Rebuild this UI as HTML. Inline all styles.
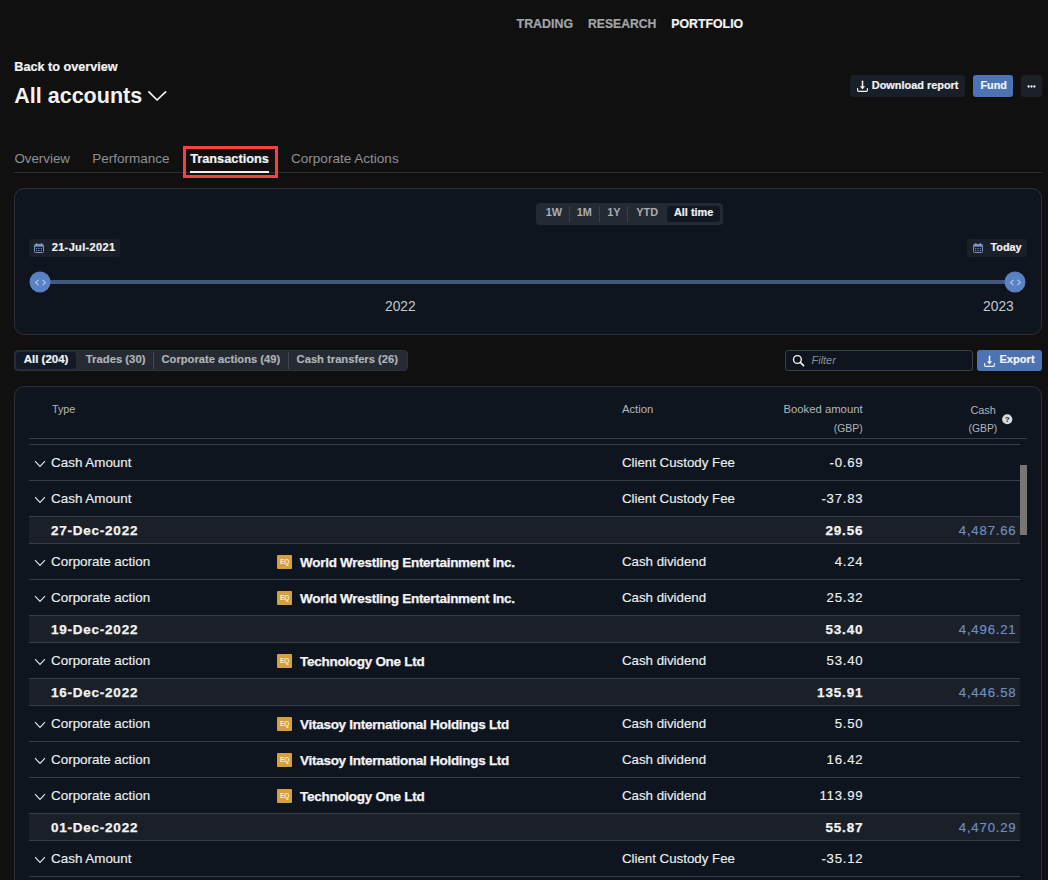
<!DOCTYPE html>
<html><head><meta charset="utf-8"><style>
html,body{margin:0;padding:0;}
body{width:1048px;height:880px;overflow:hidden;background:#101010;position:relative;font-family:"Liberation Sans",sans-serif;}
.t{position:absolute;white-space:nowrap;line-height:1;}
.r{position:absolute;}
</style></head><body>
<div class="t" style="top:18.00px;font-size:12.4px;font-weight:700;color:#a2a5aa;left:516.60px;-webkit-text-stroke:0.2px #a2a5aa;">TRADING</div>
<div class="t" style="top:18.00px;font-size:12.2px;font-weight:700;color:#a2a5aa;left:588.00px;-webkit-text-stroke:0.2px #a2a5aa;">RESEARCH</div>
<div class="t" style="top:18.00px;font-size:12.35px;font-weight:700;color:#f2f3f5;left:671.20px;-webkit-text-stroke:0.2px #f2f3f5;">PORTFOLIO</div>
<div class="t" style="top:61.00px;font-size:12.66px;font-weight:700;color:#f2f3f5;left:14.30px;-webkit-text-stroke:0.2px #f2f3f5;">Back to overview</div>
<div class="t" style="top:86.00px;font-size:21.5px;font-weight:700;color:#f2f3f5;left:14.30px;">All accounts</div>
<svg class="r" style="left:148px;top:90px" width="19" height="13" viewBox="0 0 19 13"><path d="M0.9 1.9 L9.1 10 L17.6 1.9" fill="none" stroke="#f2f3f5" stroke-width="1.7" stroke-linecap="round" stroke-linejoin="round"/></svg>
<div class="r" style="left:850px;top:75px;width:115px;height:22px;background:#191f28;border-radius:3px;"></div>
<svg class="r" style="left:856px;top:80px" width="13" height="13" viewBox="0 0 13 13"><path d="M6.5 1.2 V6.8" stroke="#f2f3f5" stroke-width="1.5" stroke-linecap="round"/><path d="M3.9 6.2 H9.1 L6.5 9.6 Z" fill="#f2f3f5"/><path d="M1.6 8.6 V10.3 Q1.6 11.4 2.7 11.4 H10.3 Q11.4 11.4 11.4 10.3 V8.6" fill="none" stroke="#f2f3f5" stroke-width="1.2" stroke-linecap="round"/></svg>
<div class="t" style="top:80.00px;font-size:10.92px;font-weight:700;color:#f2f3f5;left:871.80px;-webkit-text-stroke:0.2px #f2f3f5;">Download report</div>
<div class="r" style="left:973px;top:75px;width:40px;height:22px;background:#4c73b3;border-radius:3px;"></div>
<div class="t" style="top:80.00px;font-size:10.8px;font-weight:700;color:#f2f3f5;left:980.50px;-webkit-text-stroke:0.2px #f2f3f5;">Fund</div>
<div class="r" style="left:1021px;top:75px;width:21px;height:22px;background:#1b2029;border-radius:3px;"></div>
<svg class="r" style="left:1021px;top:75px" width="21" height="22" viewBox="0 0 21 22"><circle cx="7.6" cy="11.5" r="1.15" fill="#f2f3f5"/><circle cx="10.5" cy="11.5" r="1.15" fill="#f2f3f5"/><circle cx="13.4" cy="11.5" r="1.15" fill="#f2f3f5"/></svg>
<div class="t" style="top:152.00px;font-size:13.35px;font-weight:400;color:#8d9197;left:14.40px;">Overview</div>
<div class="t" style="top:152.00px;font-size:13.5px;font-weight:400;color:#8d9197;left:92.20px;">Performance</div>
<div class="t" style="top:153.00px;font-size:12.76px;font-weight:700;color:#f2f3f5;left:190.20px;-webkit-text-stroke:0.2px #f2f3f5;">Transactions</div>
<div class="t" style="top:152.00px;font-size:13.55px;font-weight:400;color:#8d9197;left:291.00px;">Corporate Actions</div>
<div class="r" style="left:14px;top:172px;width:1028px;height:1px;background:#2c3036;"></div>
<div class="r" style="left:190px;top:171px;width:79px;height:2px;background:#f2f3f5;"></div>
<div class="r" style="left:183px;top:146px;width:95px;height:32px;background:transparent;border:3px solid #ef4441;box-sizing:border-box;"></div>
<div class="r" style="left:14px;top:188px;width:1028px;height:147px;background:#0e151f;border:1px solid #2b3139;border-radius:10px;box-sizing:border-box;"></div>
<div class="r" style="left:536px;top:203px;width:187px;height:22px;background:#242a33;border-radius:4px;"></div>
<div class="r" style="left:569px;top:206px;width:1px;height:16px;background:#3b414a;"></div>
<div class="r" style="left:599px;top:206px;width:1px;height:16px;background:#3b414a;"></div>
<div class="r" style="left:627px;top:206px;width:1px;height:16px;background:#3b414a;"></div>
<div class="t" style="top:207.00px;font-size:10.9px;font-weight:700;color:#a9adb3;left:545.80px;">1W</div>
<div class="t" style="top:207.00px;font-size:10.9px;font-weight:700;color:#a9adb3;left:576.80px;">1M</div>
<div class="t" style="top:207.00px;font-size:10.9px;font-weight:700;color:#a9adb3;left:607.30px;">1Y</div>
<div class="t" style="top:207.00px;font-size:10.9px;font-weight:700;color:#a9adb3;left:636.30px;">YTD</div>
<div class="r" style="left:667px;top:206px;width:53px;height:16px;background:#101824;border-radius:3px;"></div>
<div class="t" style="top:207.00px;font-size:10.86px;font-weight:700;color:#f2f3f5;left:674.00px;-webkit-text-stroke:0.2px #f2f3f5;">All time</div>
<div class="r" style="left:29px;top:239px;width:91px;height:18px;background:#1a1f28;border-radius:2px;"></div>
<svg class="r" style="left:34px;top:243px" width="10" height="10" viewBox="0 0 10 10"><rect x="0.5" y="1.5" width="9" height="8" rx="1" fill="none" stroke="#7594c4" stroke-width="1"/><rect x="0.5" y="1.5" width="9" height="2.2" fill="#7594c4"/><rect x="2.3" y="0" width="1" height="2" fill="#8aa6d0"/><rect x="6.7" y="0" width="1" height="2" fill="#8aa6d0"/><rect x="2" y="5" width="1.2" height="1" fill="#6f8dbb"/><rect x="4.4" y="5" width="1.2" height="1" fill="#6f8dbb"/><rect x="6.8" y="5" width="1.2" height="1" fill="#6f8dbb"/><rect x="2" y="7" width="1.2" height="1" fill="#6f8dbb"/><rect x="4.4" y="7" width="1.2" height="1" fill="#6f8dbb"/><rect x="6.8" y="7" width="1.2" height="1" fill="#6f8dbb"/></svg>
<div class="t" style="top:242.00px;font-size:11.0px;font-weight:700;color:#f2f3f5;letter-spacing:0.35px;left:51.70px;-webkit-text-stroke:0.2px #f2f3f5;">21-Jul-2021</div>
<div class="r" style="left:967px;top:239px;width:60px;height:18px;background:#1a1f28;border-radius:2px;"></div>
<svg class="r" style="left:973px;top:243px" width="10" height="10" viewBox="0 0 10 10"><rect x="0.5" y="1.5" width="9" height="8" rx="1" fill="none" stroke="#7594c4" stroke-width="1"/><rect x="0.5" y="1.5" width="9" height="2.2" fill="#7594c4"/><rect x="2.3" y="0" width="1" height="2" fill="#8aa6d0"/><rect x="6.7" y="0" width="1" height="2" fill="#8aa6d0"/><rect x="2" y="5" width="1.2" height="1" fill="#6f8dbb"/><rect x="4.4" y="5" width="1.2" height="1" fill="#6f8dbb"/><rect x="6.8" y="5" width="1.2" height="1" fill="#6f8dbb"/><rect x="2" y="7" width="1.2" height="1" fill="#6f8dbb"/><rect x="4.4" y="7" width="1.2" height="1" fill="#6f8dbb"/><rect x="6.8" y="7" width="1.2" height="1" fill="#6f8dbb"/></svg>
<div class="t" style="top:242.00px;font-size:10.8px;font-weight:700;color:#f2f3f5;left:990.50px;-webkit-text-stroke:0.2px #f2f3f5;">Today</div>
<div class="r" style="left:40px;top:280px;width:976px;height:4px;background:#42587c;"></div>
<svg class="r" style="left:28.6px;top:271px" width="22" height="22" viewBox="0 0 22 22"><circle cx="11" cy="11" r="10.5" fill="#5a82c2"/><path d="M9.5 8.8 L6.6 11.5 L9.5 14.2 M13.5 8.8 L16.4 11.5 L13.5 14.2" fill="none" stroke="#b0c8ee" stroke-width="1.1"/></svg>
<svg class="r" style="left:1004.4px;top:271px" width="22" height="22" viewBox="0 0 22 22"><circle cx="11" cy="11" r="10.5" fill="#5a82c2"/><path d="M9.5 8.8 L6.6 11.5 L9.5 14.2 M13.5 8.8 L16.4 11.5 L13.5 14.2" fill="none" stroke="#b0c8ee" stroke-width="1.1"/></svg>
<div class="t" style="top:300.00px;font-size:13.8px;font-weight:400;color:#c4c8cc;left:385.00px;">2022</div>
<div class="t" style="top:300.00px;font-size:13.8px;font-weight:400;color:#c4c8cc;left:983.10px;">2023</div>
<div class="r" style="left:14px;top:350px;width:394px;height:21px;background:#262b33;border:1px solid #2d323a;box-sizing:border-box;border-radius:4px;"></div>
<div class="r" style="left:16px;top:352px;width:60px;height:17px;background:#111a26;border-radius:3px;"></div>
<div class="t" style="top:354.00px;font-size:11.5px;font-weight:700;color:#f2f3f5;left:23.70px;-webkit-text-stroke:0.2px #f2f3f5;">All (204)</div>
<div class="t" style="top:354.00px;font-size:11.3px;font-weight:700;color:#b0b4ba;left:85.80px;-webkit-text-stroke:0.15px #b0b4ba;">Trades (30)</div>
<div class="r" style="left:153px;top:352px;width:1px;height:17px;background:#424851;"></div>
<div class="t" style="top:354.00px;font-size:11.2px;font-weight:700;color:#b0b4ba;left:161.50px;-webkit-text-stroke:0.15px #b0b4ba;">Corporate actions (49)</div>
<div class="r" style="left:288px;top:352px;width:1px;height:17px;background:#424851;"></div>
<div class="t" style="top:354.00px;font-size:11.2px;font-weight:700;color:#b0b4ba;left:296.60px;-webkit-text-stroke:0.15px #b0b4ba;">Cash transfers (26)</div>
<div class="r" style="left:785px;top:350px;width:188px;height:21px;background:#0e151f;border:1px solid #3b4048;border-radius:3px;box-sizing:border-box;"></div>
<svg class="r" style="left:792px;top:354px" width="13" height="13" viewBox="0 0 13 13"><circle cx="5.4" cy="5.5" r="3.9" fill="none" stroke="#f2f3f5" stroke-width="1.4"/><path d="M8.3 8.4 L11.6 11.6" stroke="#f2f3f5" stroke-width="1.6" stroke-linecap="round"/></svg>
<div class="t" style="top:355.00px;font-size:10.9px;font-weight:400;color:#8a8f96;font-style:italic;left:811.60px;">Filter</div>
<div class="r" style="left:977px;top:350px;width:65px;height:21px;background:#4c73b3;border-radius:3px;"></div>
<svg class="r" style="left:983px;top:354.5px" width="13" height="13" viewBox="0 0 13 13"><path d="M6.5 1.2 V6.8" stroke="#f2f3f5" stroke-width="1.5" stroke-linecap="round"/><path d="M3.9 6.2 H9.1 L6.5 9.6 Z" fill="#f2f3f5"/><path d="M1.6 8.6 V10.3 Q1.6 11.4 2.7 11.4 H10.3 Q11.4 11.4 11.4 10.3 V8.6" fill="none" stroke="#f2f3f5" stroke-width="1.2" stroke-linecap="round"/></svg>
<div class="t" style="top:354.00px;font-size:11.14px;font-weight:700;color:#f2f3f5;left:999.40px;-webkit-text-stroke:0.2px #f2f3f5;">Export</div>
<div class="r" style="left:14px;top:386px;width:1028px;height:514px;background:#0e151f;border:1px solid #2b3139;border-radius:10px;box-sizing:border-box;"></div>
<div class="t" style="top:404.00px;font-size:10.8px;font-weight:400;color:#b0b5bb;left:51.90px;">Type</div>
<div class="t" style="top:404.00px;font-size:11.3px;font-weight:400;color:#b0b5bb;left:621.90px;">Action</div>
<div class="t" style="top:404.00px;font-size:11.3px;font-weight:400;color:#b0b5bb;right:185.40px;">Booked amount</div>
<div class="t" style="top:424.00px;font-size:10.4px;font-weight:400;color:#b0b5bb;right:185.40px;">(GBP)</div>
<div class="t" style="top:405.00px;font-size:10.9px;font-weight:400;color:#b0b5bb;right:52.20px;">Cash</div>
<div class="t" style="top:424.00px;font-size:10.4px;font-weight:400;color:#b0b5bb;right:50.70px;">(GBP)</div>
<svg class="r" style="left:1001.5px;top:413.6px" width="11" height="11" viewBox="0 0 11 11"><circle cx="5.25" cy="5.25" r="5.1" fill="#d8dbe0"/><text x="5.25" y="8.2" font-size="8" font-weight="700" text-anchor="middle" fill="#0e141c" font-family="Liberation Sans">?</text></svg>
<div class="r" style="left:29px;top:438px;width:998px;height:1px;background:#383e47;"></div>
<div class="r" style="left:29px;top:444px;width:991px;height:1px;background:#383e47;"></div>
<svg class="r" style="left:34px;top:460px" width="12" height="8" viewBox="0 0 12 8"><path d="M1 1.2 L6 6.5 L11 1.2" fill="none" stroke="#e6e8eb" stroke-width="1.1"/></svg>
<div class="t" style="top:456.00px;font-size:13.4px;font-weight:400;color:#eceef0;left:51.10px;-webkit-text-stroke:0.15px #eceef0;">Cash Amount</div>
<div class="t" style="top:456.00px;font-size:13.3px;font-weight:400;color:#eceef0;left:621.90px;-webkit-text-stroke:0.15px #eceef0;">Client Custody Fee</div>
<div class="t" style="top:456.00px;font-size:13.2px;font-weight:400;color:#eceef0;letter-spacing:0.75px;right:185.40px;margin-right:-0.75px;-webkit-text-stroke:0.15px #eceef0;">-0.69</div>
<div class="r" style="left:29px;top:480px;width:991px;height:1px;background:#383e47;"></div>
<svg class="r" style="left:34px;top:496px" width="12" height="8" viewBox="0 0 12 8"><path d="M1 1.2 L6 6.5 L11 1.2" fill="none" stroke="#e6e8eb" stroke-width="1.1"/></svg>
<div class="t" style="top:492.00px;font-size:13.4px;font-weight:400;color:#eceef0;left:51.10px;-webkit-text-stroke:0.15px #eceef0;">Cash Amount</div>
<div class="t" style="top:492.00px;font-size:13.3px;font-weight:400;color:#eceef0;left:621.90px;-webkit-text-stroke:0.15px #eceef0;">Client Custody Fee</div>
<div class="t" style="top:492.00px;font-size:13.2px;font-weight:400;color:#eceef0;letter-spacing:0.75px;right:185.40px;margin-right:-0.75px;-webkit-text-stroke:0.15px #eceef0;">-37.83</div>
<div class="r" style="left:29px;top:516px;width:991px;height:1px;background:#383e47;"></div>
<div class="r" style="left:29px;top:517px;width:991px;height:26px;background:#1a1f28;"></div>
<div class="t" style="top:524.00px;font-size:13.5px;font-weight:700;color:#f2f3f5;letter-spacing:0.75px;left:51.10px;-webkit-text-stroke:0.25px #f2f3f5;">27-Dec-2022</div>
<div class="t" style="top:524.00px;font-size:13.5px;font-weight:700;color:#f2f3f5;letter-spacing:0.85px;right:185.40px;margin-right:-0.85px;-webkit-text-stroke:0.25px #f2f3f5;">29.56</div>
<div class="t" style="top:524.00px;font-size:13.2px;font-weight:400;color:#6e8ec2;letter-spacing:0.8px;right:32.30px;margin-right:-0.8px;-webkit-text-stroke:0.2px #6e8ec2;">4,487.66</div>
<div class="r" style="left:29px;top:543px;width:991px;height:1px;background:#383e47;"></div>
<svg class="r" style="left:34px;top:559px" width="12" height="8" viewBox="0 0 12 8"><path d="M1 1.2 L6 6.5 L11 1.2" fill="none" stroke="#e6e8eb" stroke-width="1.1"/></svg>
<div class="t" style="top:555.00px;font-size:13.4px;font-weight:400;color:#eceef0;left:51.10px;-webkit-text-stroke:0.15px #eceef0;">Corporate action</div>
<div class="r" style="left:277px;top:555px;width:15px;height:14px;background:#d6a03c;border-radius:1px;"></div>
<div class="t" style="left:277px;top:559px;width:15px;text-align:center;font-size:6.5px;font-weight:700;color:#f7eed6;line-height:6px;letter-spacing:-0.2px">EQ</div>
<div class="t" style="top:556.00px;font-size:13.5px;font-weight:700;color:#f2f3f5;letter-spacing:-0.29px;left:300.10px;-webkit-text-stroke:0.25px #f2f3f5;">World Wrestling Entertainment Inc.</div>
<div class="t" style="top:555.00px;font-size:13.3px;font-weight:400;color:#eceef0;left:621.90px;-webkit-text-stroke:0.15px #eceef0;">Cash dividend</div>
<div class="t" style="top:555.00px;font-size:13.2px;font-weight:400;color:#eceef0;letter-spacing:0.75px;right:185.40px;margin-right:-0.75px;-webkit-text-stroke:0.15px #eceef0;">4.24</div>
<div class="r" style="left:29px;top:579px;width:991px;height:1px;background:#383e47;"></div>
<svg class="r" style="left:34px;top:595px" width="12" height="8" viewBox="0 0 12 8"><path d="M1 1.2 L6 6.5 L11 1.2" fill="none" stroke="#e6e8eb" stroke-width="1.1"/></svg>
<div class="t" style="top:591.00px;font-size:13.4px;font-weight:400;color:#eceef0;left:51.10px;-webkit-text-stroke:0.15px #eceef0;">Corporate action</div>
<div class="r" style="left:277px;top:591px;width:15px;height:14px;background:#d6a03c;border-radius:1px;"></div>
<div class="t" style="left:277px;top:595px;width:15px;text-align:center;font-size:6.5px;font-weight:700;color:#f7eed6;line-height:6px;letter-spacing:-0.2px">EQ</div>
<div class="t" style="top:592.00px;font-size:13.5px;font-weight:700;color:#f2f3f5;letter-spacing:-0.29px;left:300.10px;-webkit-text-stroke:0.25px #f2f3f5;">World Wrestling Entertainment Inc.</div>
<div class="t" style="top:591.00px;font-size:13.3px;font-weight:400;color:#eceef0;left:621.90px;-webkit-text-stroke:0.15px #eceef0;">Cash dividend</div>
<div class="t" style="top:591.00px;font-size:13.2px;font-weight:400;color:#eceef0;letter-spacing:0.75px;right:185.40px;margin-right:-0.75px;-webkit-text-stroke:0.15px #eceef0;">25.32</div>
<div class="r" style="left:29px;top:615px;width:991px;height:1px;background:#383e47;"></div>
<div class="r" style="left:29px;top:616px;width:991px;height:26px;background:#1a1f28;"></div>
<div class="t" style="top:623.00px;font-size:13.5px;font-weight:700;color:#f2f3f5;letter-spacing:0.75px;left:51.10px;-webkit-text-stroke:0.25px #f2f3f5;">19-Dec-2022</div>
<div class="t" style="top:623.00px;font-size:13.5px;font-weight:700;color:#f2f3f5;letter-spacing:0.85px;right:185.40px;margin-right:-0.85px;-webkit-text-stroke:0.25px #f2f3f5;">53.40</div>
<div class="t" style="top:623.00px;font-size:13.2px;font-weight:400;color:#6e8ec2;letter-spacing:0.8px;right:32.30px;margin-right:-0.8px;-webkit-text-stroke:0.2px #6e8ec2;">4,496.21</div>
<div class="r" style="left:29px;top:642px;width:991px;height:1px;background:#383e47;"></div>
<svg class="r" style="left:34px;top:658px" width="12" height="8" viewBox="0 0 12 8"><path d="M1 1.2 L6 6.5 L11 1.2" fill="none" stroke="#e6e8eb" stroke-width="1.1"/></svg>
<div class="t" style="top:654.00px;font-size:13.4px;font-weight:400;color:#eceef0;left:51.10px;-webkit-text-stroke:0.15px #eceef0;">Corporate action</div>
<div class="r" style="left:277px;top:654px;width:15px;height:14px;background:#d6a03c;border-radius:1px;"></div>
<div class="t" style="left:277px;top:658px;width:15px;text-align:center;font-size:6.5px;font-weight:700;color:#f7eed6;line-height:6px;letter-spacing:-0.2px">EQ</div>
<div class="t" style="top:655.00px;font-size:13.5px;font-weight:700;color:#f2f3f5;letter-spacing:-0.29px;left:300.10px;-webkit-text-stroke:0.25px #f2f3f5;">Technology One Ltd</div>
<div class="t" style="top:654.00px;font-size:13.3px;font-weight:400;color:#eceef0;left:621.90px;-webkit-text-stroke:0.15px #eceef0;">Cash dividend</div>
<div class="t" style="top:654.00px;font-size:13.2px;font-weight:400;color:#eceef0;letter-spacing:0.75px;right:185.40px;margin-right:-0.75px;-webkit-text-stroke:0.15px #eceef0;">53.40</div>
<div class="r" style="left:29px;top:678px;width:991px;height:1px;background:#383e47;"></div>
<div class="r" style="left:29px;top:679px;width:991px;height:26px;background:#1a1f28;"></div>
<div class="t" style="top:686.00px;font-size:13.5px;font-weight:700;color:#f2f3f5;letter-spacing:0.75px;left:51.10px;-webkit-text-stroke:0.25px #f2f3f5;">16-Dec-2022</div>
<div class="t" style="top:686.00px;font-size:13.5px;font-weight:700;color:#f2f3f5;letter-spacing:0.85px;right:185.40px;margin-right:-0.85px;-webkit-text-stroke:0.25px #f2f3f5;">135.91</div>
<div class="t" style="top:686.00px;font-size:13.2px;font-weight:400;color:#6e8ec2;letter-spacing:0.8px;right:32.30px;margin-right:-0.8px;-webkit-text-stroke:0.2px #6e8ec2;">4,446.58</div>
<div class="r" style="left:29px;top:705px;width:991px;height:1px;background:#383e47;"></div>
<svg class="r" style="left:34px;top:721px" width="12" height="8" viewBox="0 0 12 8"><path d="M1 1.2 L6 6.5 L11 1.2" fill="none" stroke="#e6e8eb" stroke-width="1.1"/></svg>
<div class="t" style="top:717.00px;font-size:13.4px;font-weight:400;color:#eceef0;left:51.10px;-webkit-text-stroke:0.15px #eceef0;">Corporate action</div>
<div class="r" style="left:277px;top:717px;width:15px;height:14px;background:#d6a03c;border-radius:1px;"></div>
<div class="t" style="left:277px;top:721px;width:15px;text-align:center;font-size:6.5px;font-weight:700;color:#f7eed6;line-height:6px;letter-spacing:-0.2px">EQ</div>
<div class="t" style="top:718.00px;font-size:13.5px;font-weight:700;color:#f2f3f5;letter-spacing:-0.29px;left:300.10px;-webkit-text-stroke:0.25px #f2f3f5;">Vitasoy International Holdings Ltd</div>
<div class="t" style="top:717.00px;font-size:13.3px;font-weight:400;color:#eceef0;left:621.90px;-webkit-text-stroke:0.15px #eceef0;">Cash dividend</div>
<div class="t" style="top:717.00px;font-size:13.2px;font-weight:400;color:#eceef0;letter-spacing:0.75px;right:185.40px;margin-right:-0.75px;-webkit-text-stroke:0.15px #eceef0;">5.50</div>
<div class="r" style="left:29px;top:741px;width:991px;height:1px;background:#383e47;"></div>
<svg class="r" style="left:34px;top:757px" width="12" height="8" viewBox="0 0 12 8"><path d="M1 1.2 L6 6.5 L11 1.2" fill="none" stroke="#e6e8eb" stroke-width="1.1"/></svg>
<div class="t" style="top:753.00px;font-size:13.4px;font-weight:400;color:#eceef0;left:51.10px;-webkit-text-stroke:0.15px #eceef0;">Corporate action</div>
<div class="r" style="left:277px;top:753px;width:15px;height:14px;background:#d6a03c;border-radius:1px;"></div>
<div class="t" style="left:277px;top:757px;width:15px;text-align:center;font-size:6.5px;font-weight:700;color:#f7eed6;line-height:6px;letter-spacing:-0.2px">EQ</div>
<div class="t" style="top:754.00px;font-size:13.5px;font-weight:700;color:#f2f3f5;letter-spacing:-0.29px;left:300.10px;-webkit-text-stroke:0.25px #f2f3f5;">Vitasoy International Holdings Ltd</div>
<div class="t" style="top:753.00px;font-size:13.3px;font-weight:400;color:#eceef0;left:621.90px;-webkit-text-stroke:0.15px #eceef0;">Cash dividend</div>
<div class="t" style="top:753.00px;font-size:13.2px;font-weight:400;color:#eceef0;letter-spacing:0.75px;right:185.40px;margin-right:-0.75px;-webkit-text-stroke:0.15px #eceef0;">16.42</div>
<div class="r" style="left:29px;top:777px;width:991px;height:1px;background:#383e47;"></div>
<svg class="r" style="left:34px;top:793px" width="12" height="8" viewBox="0 0 12 8"><path d="M1 1.2 L6 6.5 L11 1.2" fill="none" stroke="#e6e8eb" stroke-width="1.1"/></svg>
<div class="t" style="top:789.00px;font-size:13.4px;font-weight:400;color:#eceef0;left:51.10px;-webkit-text-stroke:0.15px #eceef0;">Corporate action</div>
<div class="r" style="left:277px;top:789px;width:15px;height:14px;background:#d6a03c;border-radius:1px;"></div>
<div class="t" style="left:277px;top:793px;width:15px;text-align:center;font-size:6.5px;font-weight:700;color:#f7eed6;line-height:6px;letter-spacing:-0.2px">EQ</div>
<div class="t" style="top:790.00px;font-size:13.5px;font-weight:700;color:#f2f3f5;letter-spacing:-0.29px;left:300.10px;-webkit-text-stroke:0.25px #f2f3f5;">Technology One Ltd</div>
<div class="t" style="top:789.00px;font-size:13.3px;font-weight:400;color:#eceef0;left:621.90px;-webkit-text-stroke:0.15px #eceef0;">Cash dividend</div>
<div class="t" style="top:789.00px;font-size:13.2px;font-weight:400;color:#eceef0;letter-spacing:0.75px;right:185.40px;margin-right:-0.75px;-webkit-text-stroke:0.15px #eceef0;">113.99</div>
<div class="r" style="left:29px;top:813px;width:991px;height:1px;background:#383e47;"></div>
<div class="r" style="left:29px;top:814px;width:991px;height:26px;background:#1a1f28;"></div>
<div class="t" style="top:821.00px;font-size:13.5px;font-weight:700;color:#f2f3f5;letter-spacing:0.75px;left:51.10px;-webkit-text-stroke:0.25px #f2f3f5;">01-Dec-2022</div>
<div class="t" style="top:821.00px;font-size:13.5px;font-weight:700;color:#f2f3f5;letter-spacing:0.85px;right:185.40px;margin-right:-0.85px;-webkit-text-stroke:0.25px #f2f3f5;">55.87</div>
<div class="t" style="top:821.00px;font-size:13.2px;font-weight:400;color:#6e8ec2;letter-spacing:0.8px;right:32.30px;margin-right:-0.8px;-webkit-text-stroke:0.2px #6e8ec2;">4,470.29</div>
<div class="r" style="left:29px;top:840px;width:991px;height:1px;background:#383e47;"></div>
<svg class="r" style="left:34px;top:856px" width="12" height="8" viewBox="0 0 12 8"><path d="M1 1.2 L6 6.5 L11 1.2" fill="none" stroke="#e6e8eb" stroke-width="1.1"/></svg>
<div class="t" style="top:852.00px;font-size:13.4px;font-weight:400;color:#eceef0;left:51.10px;-webkit-text-stroke:0.15px #eceef0;">Cash Amount</div>
<div class="t" style="top:852.00px;font-size:13.3px;font-weight:400;color:#eceef0;left:621.90px;-webkit-text-stroke:0.15px #eceef0;">Client Custody Fee</div>
<div class="t" style="top:852.00px;font-size:13.2px;font-weight:400;color:#eceef0;letter-spacing:0.75px;right:185.40px;margin-right:-0.75px;-webkit-text-stroke:0.15px #eceef0;">-35.12</div>
<div class="r" style="left:29px;top:876px;width:991px;height:1px;background:#383e47;"></div>
<div class="r" style="left:29px;top:912px;width:991px;height:1px;background:#383e47;"></div>
<div class="r" style="left:1020px;top:465px;width:7px;height:70px;background:#777675;"></div>
</body></html>
